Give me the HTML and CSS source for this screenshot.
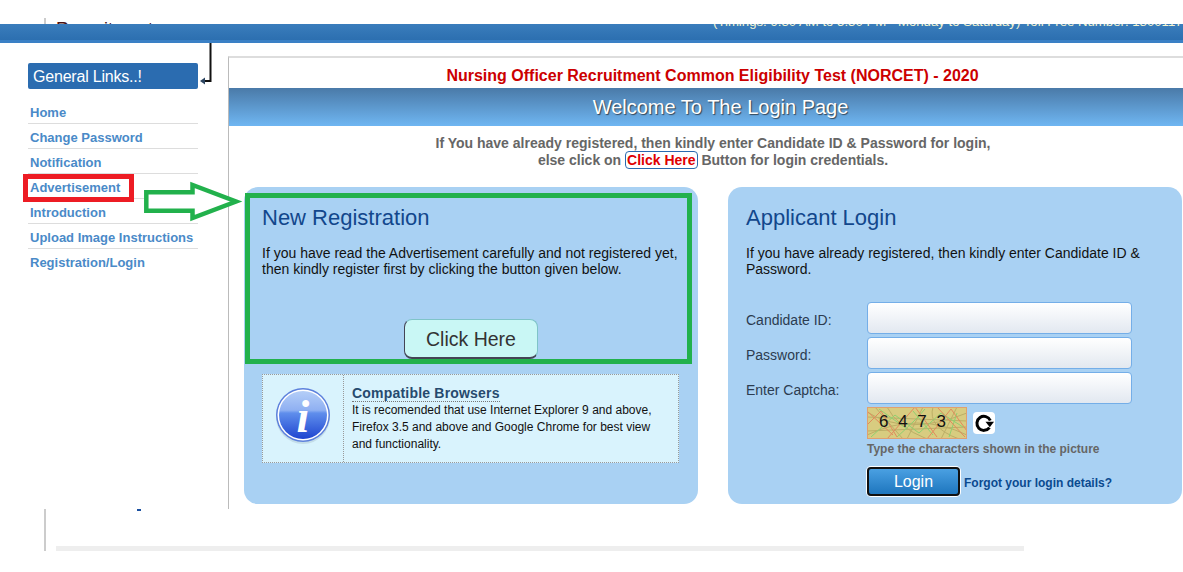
FILE: index.html
```html
<!DOCTYPE html>
<html lang="en">
<head>
    <meta charset="UTF-8">
    <meta name="viewport" content="width=device-width, initial-scale=1.0">
    <title>NORCET 2020 Login</title>
    <link rel="stylesheet" href="styles.css">
</head>
<body>
    <div class="page">
        <div class="top-strip">
            <div class="org-clip">
                <span class="org-name">Recruitment</span>
            </div>
        </div>
        <div class="header-bar">
            <p class="helpline">(Timings: 9:30 AM to 5:30 PM - Monday to Saturday) Toll Free Number: 1800117898</p>
        </div>

        <div class="main">
            <div class="sidebar">
                <h3 class="side-title">General Links..!</h3>
                <ul class="side-links">
                    <li><a href="#">Home</a></li>
                    <li><a href="#">Change Password</a></li>
                    <li><a href="#">Notification</a></li>
                    <li><a href="#">Advertisement</a></li>
                    <li><a href="#">Introduction</a></li>
                    <li><a href="#">Upload Image Instructions</a></li>
                    <li><a href="#">Registration/Login</a></li>
                </ul>
            </div>

            <div class="content">
                <h2 class="exam-title">Nursing Officer Recruitment Common Eligibility Test (NORCET) - 2020</h2>
                <div class="welcome">Welcome To The Login Page</div>
                <p class="intro">
                    If You have already registered, then kindly enter Candidate ID &amp; Password for login,<br>
                    else click on <a href="#" class="intro-link">Click Here</a> Button for login credentials.
                </p>

                <div class="panels">
                    <div class="panel">
                        <h2 class="panel-title">New Registration</h2>
                        <p class="panel-text">If you have read the Advertisement carefully and not registered yet, then kindly register first by clicking the button given below.</p>
                        <div class="register-row">
                            <button class="register-btn">Click Here</button>
                        </div>
                        <div class="info-box">
                            <div class="info-icon">
                                <svg width="58" height="58" viewBox="0 0 58 58">
                                    <defs>
                                        <linearGradient id="info-fill" x1="0" y1="0" x2="0" y2="1">
                                            <stop offset="0" stop-color="#b4cef8"/>
                                            <stop offset="0.40" stop-color="#8fb0f2"/>
                                            <stop offset="0.46" stop-color="#5f8eec"/>
                                            <stop offset="1" stop-color="#1f45d0"/>
                                        </linearGradient>
                                    </defs>
                                    <circle cx="29" cy="31" r="27" fill="#9fb4c4" opacity="0.35"/>
                                    <circle cx="29" cy="29" r="27" fill="#5c80dc"/>
                                    <circle cx="29" cy="29" r="25.500" fill="#fff"/>
                                    <circle cx="29" cy="29" r="24" fill="url(#info-fill)"/>
                                    <text x="29" y="46" class="info-letter" text-anchor="middle">i</text>
                                </svg>
                            </div>
                            <div class="info-text">
                                <h4 class="info-title">Compatible Browsers</h4>
                                <p>It is recomended that use Internet Explorer 9 and above, Firefox 3.5 and above and Google Chrome for best view and functionality.</p>
                            </div>
                        </div>
                    </div>

                    <div class="panel">
                        <h2 class="panel-title">Applicant Login</h2>
                        <p class="panel-text">If you have already registered, then kindly enter Candidate ID &amp; Password.</p>
                        <form class="login-form">
                            <label for="cand">Candidate ID:</label>
                            <input id="cand" type="text">
                            <label for="pass">Password:</label>
                            <input id="pass" type="password">
                            <label for="capt">Enter Captcha:</label>
                            <input id="capt" type="text">
                            <div class="captcha-cell">
                                <div class="captcha-row">
                                    <div class="captcha-img">
                                        <svg width="100" height="32" viewBox="0 0 100 32">
                                            <g fill="none" stroke="#bcae66" stroke-width="1">
                                                <path d="M0 10 L100 14 M0 24 L100 20 M8 0 L36 32 M56 0 L40 32 M90 0 L74 32 M0 5 Q40 30 100 6 M0 28 Q50 4 100 28 M20 0 Q30 20 60 32 M66 0 Q60 20 92 32"/>
                                            </g>
                                            <g fill="none" stroke="#8fd070" stroke-width="1">
                                                <path d="M4 30 L28 8 L52 26 L74 6 L96 20 M12 2 L40 22 M46 4 L66 28 M82 30 L90 6 M30 30 Q50 12 58 2"/>
                                            </g>
                                            <g fill="none" stroke="#e08a5c" stroke-width="1">
                                                <path d="M0 18 L14 4 L30 30 M20 32 L48 0 L70 30 M60 32 L84 2 L100 24 M0 4 L26 28 M70 0 L98 30"/>
                                            </g>
                                        </svg>
                                        <span class="captcha-digits">6 4 7 3</span>
                                    </div>
                                    <div class="refresh-btn">
                                        <svg width="20" height="20" viewBox="0 0 20 20">
                                            <path d="M16.300 7.500A7 7 0 1 0 15.500 14.600" fill="none" stroke="#000" stroke-width="3"/>
                                            <path d="M11.500 8.800H20L15.800 14.200Z" fill="#000"/>
                                        </svg>
                                    </div>
                                </div>
                                <div class="captcha-hint">Type the characters shown in the picture</div>
                                <div class="login-row">
                                    <button type="button" class="login-btn">Login</button>
                                    <a href="#" class="forgot">Forgot your login details?</a>
                                </div>
                            </div>
                        </form>
                    </div>
                </div>
            </div>
        </div>

        <div class="bottom">
            <span class="tick"></span>
            <div class="bottom-bar"></div>
        </div>

        <!-- annotations drawn over the screenshot -->
        <svg class="thin-arrow" width="14" height="42" viewBox="0 0 14 42">
            <path d="M10.500 0V38H4" fill="none" stroke="#111" stroke-width="2"/>
            <path d="M0 38L5 34.500V41.500Z" fill="#2c4560"/>
        </svg>
        <div class="red-box"></div>
        <svg class="green-arrow" width="100" height="44" viewBox="0 0 100 44">
            <path d="M3.300 12.300H49.500V5L93 21.500L49.500 38V30.700H3.300Z" fill="#fff" stroke="#22b14c" stroke-width="4.500"/>
        </svg>
        <div class="green-box"></div>
    </div>
</body>
</html>
```

FILE: styles.css
```css
* {
    box-sizing: border-box;
}
html, body {
    margin: 0;
    padding: 0;
    background: #fff;
}
body {
    font-family: "Liberation Sans", Arial, sans-serif;
    overflow: hidden;
}
.page {
    position: relative;
    width: 1183px;
    height: 572px;
    overflow: hidden;
}
.top-strip {
    height: 24px;
    padding: 18px 0 0 44px;
}
.org-clip {
    height: 6px;
    padding-left: 10px;
    border-left: 2px solid #ccc;
    overflow: hidden;
}
.org-name {
    display: block;
    font-size: 18px;
    line-height: 22px;
    color: #4a1010;
}
.header-bar {
    height: 19px;
    background: linear-gradient(to bottom, #3a7dbc, #2c6fb0);
    border-bottom: 3px solid #3a80c5;
    overflow: hidden;
}
.helpline {
    margin: -10px 0 0 713px;
    font-size: 13.200px;
    line-height: 16px;
    white-space: nowrap;
    color: #f4f4d0;
}
.main {
    display: flex;
    height: 466px;
    padding-top: 13px;
    overflow: hidden;
}
.sidebar {
    flex: none;
    width: 170px;
    margin-left: 28px;
    padding-top: 7px;
}
.side-title {
    margin: 0;
    height: 26px;
    padding-left: 5px;
    font-size: 16px;
    font-weight: normal;
    line-height: 27px;
    letter-spacing: -0.2px;
    color: #fff;
    background: #2b6cb0;
    border-radius: 2px;
}
.side-links {
    list-style: none;
    margin: 10px 0 0;
    padding: 0;
}
.side-links li {
    height: 25px;
    padding-left: 2px;
    border-bottom: 1px solid #ddd;
    font-size: 13px;
    line-height: 28px;
    font-weight: bold;
    white-space: nowrap;
}
.side-links li:last-child {
    border-bottom: none;
}
.side-links a {
    color: #4a8ac8;
    text-decoration: none;
}
.content {
    flex: none;
    width: 968px;
    margin-left: 30px;
    border-left: 1px solid #bbb;
    border-top: 2px solid #ddd;
}
.exam-title {
    margin: 0;
    height: 30px;
    font-size: 16px;
    line-height: 36px;
    text-align: center;
    color: #cc0000;
}
.welcome {
    height: 38px;
    padding-left: 16px;
    font-size: 20px;
    line-height: 38px;
    text-align: center;
    color: #fff;
    text-shadow: 1px 1px 1px #345;
    background: linear-gradient(to bottom, #4a7aa8, #6fb6f2);
}
.intro {
    margin: 0;
    padding: 9px 0 0 1px;
    font-size: 14px;
    line-height: 17px;
    font-weight: bold;
    text-align: center;
    color: #666;
}
.intro-link {
    padding: 0 1px;
    color: #e00000;
    text-decoration: none;
    border: 1px solid #2a6ab0;
    border-radius: 4px;
}
.panels {
    display: flex;
    gap: 30px;
    margin: 18px 0 0 15px;
}
.panel {
    flex: none;
    width: 454px;
    height: 317px;
    padding: 18px 18px 0;
    background: #a9d1f3;
    border-radius: 14px;
}
.panel-title {
    margin: 0;
    font-size: 22px;
    line-height: 26px;
    font-weight: normal;
    color: #12478c;
}
.panel-text {
    margin: 14px 0 0;
    font-size: 14px;
    line-height: 16px;
    color: #111;
}
.register-row {
    margin-top: 42px;
    text-align: center;
}
.register-btn {
    width: 134px;
    height: 40px;
    padding: 2px 0 0;
    font-family: inherit;
    font-size: 19.500px;
    color: #333;
    background: #c9f7f5;
    border: 1px solid #7fc4c8;
    border-bottom: 2px solid #445;
    border-left-color: #445;
    border-radius: 8px;
}
.info-box {
    display: flex;
    width: 417px;
    height: 89px;
    margin-top: 15px;
    background: #d9f3fd;
    border: 1px dotted #999;
}
.info-icon {
    flex: none;
    display: flex;
    align-items: center;
    justify-content: center;
    width: 81px;
    padding-bottom: 7px;
    border-right: 1px dotted #999;
}
.info-letter {
    font-family: "Liberation Serif", serif;
    font-style: italic;
    font-weight: bold;
    font-size: 46px;
    fill: #fff;
}
.info-text {
    padding: 9px 18px 0 8px;
}
.info-title {
    display: inline-block;
    margin: 0;
    font-size: 14px;
    line-height: 16px;
    letter-spacing: 0.2px;
    color: #264a6e;
    border-bottom: 1px dotted #777;
}
.info-text p {
    margin: 0;
    font-size: 12px;
    line-height: 17px;
    color: #111;
}
.login-form {
    display: grid;
    grid-template-columns: 121px 265px;
    grid-auto-rows: 32px;
    row-gap: 3px;
    margin-top: 25px;
}
.login-form label {
    font-size: 14px;
    line-height: 36px;
    color: #2c3c50;
}
.login-form input {
    width: 265px;
    height: 32px;
    background: linear-gradient(to bottom, #fff, #e2e8f0);
    border: 1px solid #74aee8;
    border-radius: 4px;
}
.captcha-cell {
    grid-column: 2;
}
.captcha-row {
    display: flex;
    align-items: center;
    gap: 6px;
}
.captcha-img {
    position: relative;
    width: 100px;
    height: 32px;
    background: #d8cc80;
    border: 1px solid #e0a070;
    overflow: hidden;
}
.captcha-img svg {
    display: block;
    margin: -1px;
}
.captcha-digits {
    position: absolute;
    left: 11px;
    top: 5px;
    font-size: 17px;
    line-height: 18px;
    word-spacing: 5px;
    color: #111;
}
.refresh-btn {
    display: flex;
    align-items: center;
    justify-content: center;
    width: 22px;
    height: 22px;
    background: #fff;
    border-radius: 4px;
}
.captcha-hint {
    margin-top: 3px;
    font-size: 12px;
    line-height: 15px;
    font-weight: bold;
    color: #666;
}
.login-row {
    display: flex;
    align-items: center;
    gap: 4px;
    margin-top: 10px;
}
.login-btn {
    width: 93px;
    height: 29px;
    padding: 0;
    font-family: inherit;
    font-size: 16px;
    color: #fff;
    background: linear-gradient(to bottom, #4aa0e2, #1e76be);
    border: 2px solid #111;
    border-radius: 4px;
    box-shadow: 0 0 0 1px #fff;
}
.forgot {
    padding-top: 2px;
    font-size: 12px;
    font-weight: bold;
    color: #0b4a8f;
    text-decoration: none;
}
.bottom {
    height: 42px;
    margin-left: 44px;
    padding: 37px 0 0 10px;
    border-left: 2px solid #ccc;
}
.tick {
    position: absolute;
    left: 137px;
    top: 509px;
    width: 4px;
    height: 2px;
    background: #1a50a0;
}
.bottom-bar {
    width: 968px;
    height: 5px;
    background: #eee;
}
.thin-arrow {
    position: absolute;
    left: 200px;
    top: 43px;
}
.red-box {
    position: absolute;
    left: 23px;
    top: 174px;
    width: 111px;
    height: 28px;
    border: 5px solid #ed1c24;
}
.green-arrow {
    position: absolute;
    left: 143px;
    top: 180px;
}
.green-box {
    position: absolute;
    left: 245px;
    top: 193px;
    width: 447px;
    height: 171px;
    border: 5px solid #22b14c;
}
```
